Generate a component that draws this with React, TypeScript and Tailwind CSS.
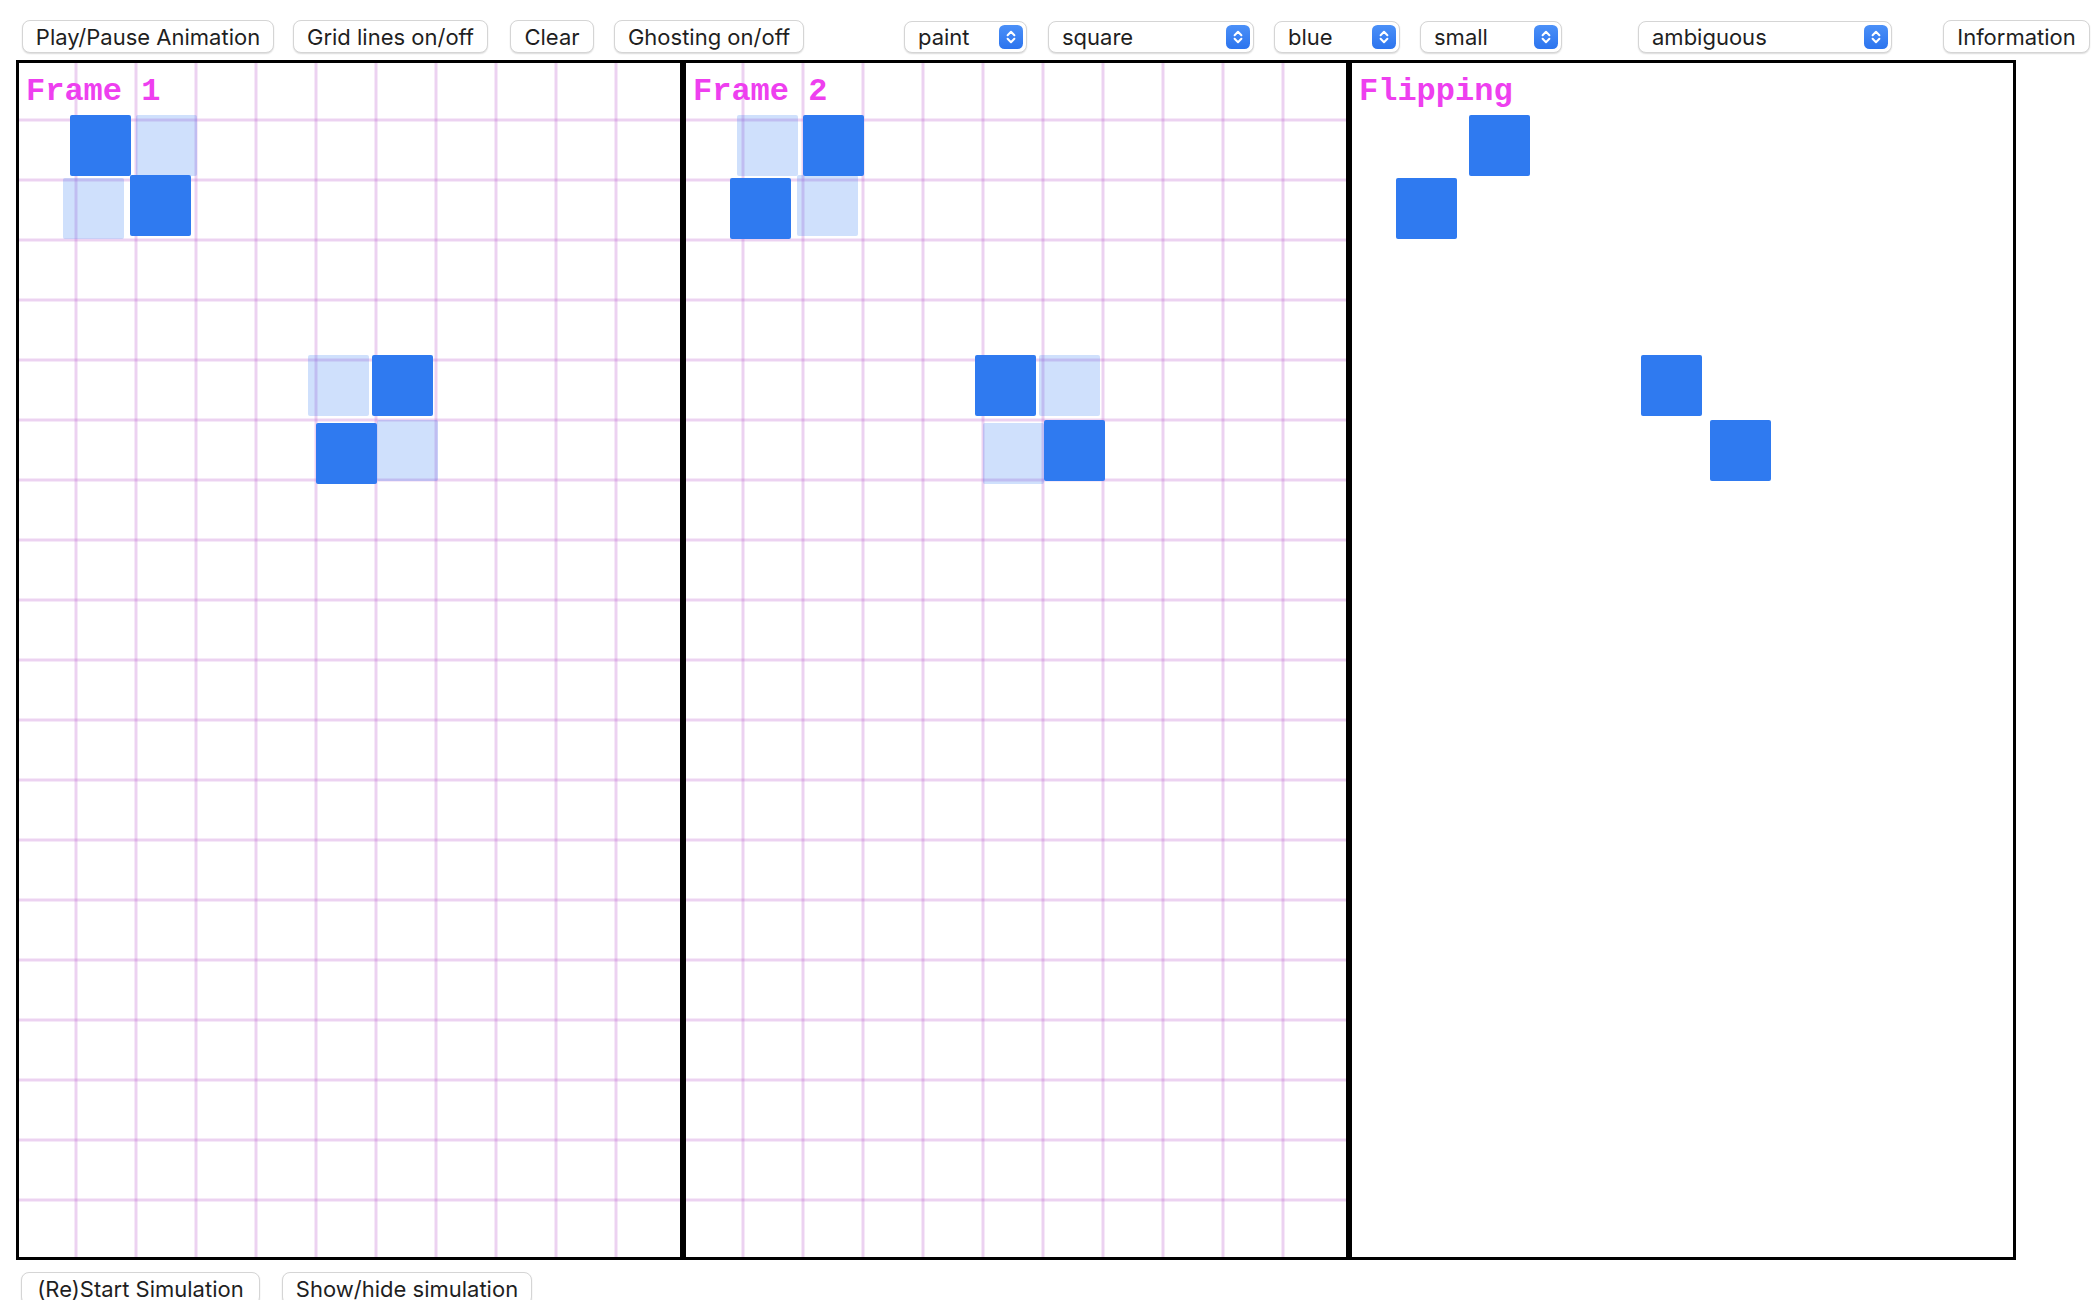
import type { ReactNode } from 'react';

const BLUE = '#2f7af0';
const SIZE = 61;

// frame-relative square positions (x from frame outer left, y from canvas top)
type Sq = [number, number];
const FRAME_A: Sq[] = [
	[54, 55],
	[114, 115],
	[356, 295],
	[300, 363],
];
const FRAME_B: Sq[] = [
	[120, 55],
	[47, 118],
	[292, 295],
	[361, 360],
];

const V_LINES = Array.from({ length: 10 }, (_, i) => (i + 1) * 60);
const H_LINES = Array.from({ length: 19 }, (_, i) => (i + 1) * 60);

function Frame({
	title,
	solid,
	ghost,
	grid,
}: {
	title: string;
	solid: Sq[];
	ghost?: Sq[];
	grid?: boolean;
}) {
	return (
		<div className="relative h-full w-1/3 border-[3px] border-black bg-white">
			<svg className="absolute inset-0 h-full w-full">
				<g transform="translate(-3,-3)">
					{grid && (
						<g stroke="rgba(185,90,205,0.27)" strokeWidth={3}>
							{V_LINES.map((x) => (
								<line key={'v' + x} x1={x} y1={0} x2={x} y2={1200} />
							))}
							{H_LINES.map((y) => (
								<line key={'h' + y} x1={0} y1={y} x2={667} y2={y} />
							))}
						</g>
					)}
					{ghost?.map(([x, y]) => (
						<rect
							key={'g' + x + y}
							x={x}
							y={y}
							width={SIZE}
							height={SIZE}
							rx={2}
							fill={BLUE}
							opacity={0.23}
						/>
					))}
					{solid.map(([x, y]) => (
						<rect
							key={'s' + x + y}
							x={x}
							y={y}
							width={SIZE}
							height={SIZE}
							rx={2}
							fill={BLUE}
						/>
					))}
					<text
						x={10}
						y={40}
						fontFamily="'Liberation Mono', 'Courier New', monospace"
						fontWeight={700}
						fontSize={32}
						fill="#ee3fef"
					>
						{title}
					</text>
				</g>
			</svg>
		</div>
	);
}

function Btn({ children, className }: { children: ReactNode; className: string }) {
	return (
		<button
			className={
				'flex h-[33px] shrink-0 items-center justify-center rounded-[8px] border border-[#d5d5d5] bg-white pt-[1px] text-[22px] text-[#1f1f1f] shadow-[0_1px_1.5px_rgba(0,0,0,0.14)] ' +
				className
			}
		>
			{children}
		</button>
	);
}

function Stepper() {
	return (
		<svg width="24" height="24" viewBox="0 0 24 24" className="shrink-0">
			<defs>
				<linearGradient id="stp" x1="0" y1="0" x2="0" y2="1">
					<stop offset="0" stopColor="#4b90f8" />
					<stop offset="1" stopColor="#2c74ee" />
				</linearGradient>
			</defs>
			<rect x="0" y="0" width="24" height="24" rx="5.5" fill="url(#stp)" />
			<path
				d="M8.6 10.2 L12 6.8 L15.4 10.2 M8.6 13.8 L12 17.2 L15.4 13.8"
				stroke="white"
				strokeWidth="2"
				fill="none"
				strokeLinecap="round"
				strokeLinejoin="round"
			/>
		</svg>
	);
}

function Select({ value, className }: { value: string; className: string }) {
	return (
		<div
			className={
				'flex h-[32px] shrink-0 items-center justify-between rounded-[8px] border border-[#d5d5d5] bg-white pl-[13px] pr-[3px] text-[22px] text-[#1f1f1f] shadow-[0_1px_1.5px_rgba(0,0,0,0.14)] ' +
				className
			}
		>
			<span className="pt-[1px]">{value}</span>
			<Stepper />
		</div>
	);
}

export default function App() {
	return (
		<div className="min-h-screen bg-white font-['Inter',sans-serif]">
			<div className="flex items-center pl-[22px] pt-[20px]">
				<Btn className="w-[252px]">Play/Pause Animation</Btn>
				<Btn className="ml-[19px] w-[195px]">Grid lines on/off</Btn>
				<Btn className="ml-[22px] w-[84px]">Clear</Btn>
				<Btn className="ml-[20px] w-[190px]">Ghosting on/off</Btn>
				<Select value="paint" className="ml-[100px] w-[123px]" />
				<Select value="square" className="ml-[21px] w-[206px]" />
				<Select value="blue" className="ml-[20px] w-[126px]" />
				<Select value="small" className="ml-[20px] w-[142px]" />
				<Select value="ambiguous" className="ml-[76px] w-[254px]" />
				<Btn className="ml-[51px] w-[147px]">Information</Btn>
			</div>

			<div className="mt-[7px] pl-[16px]">
				<div className="flex h-[1200px] w-[2000px]">
					<Frame title="Frame 1" solid={FRAME_A} ghost={FRAME_B} grid />
					<Frame title="Frame 2" solid={FRAME_B} ghost={FRAME_A} grid />
					<Frame title="Flipping" solid={FRAME_B} />
				</div>
			</div>

			<div className="mt-[12px] flex items-center pl-[21px]">
				<Btn className="w-[239px]">(Re)Start Simulation</Btn>
				<Btn className="ml-[22px] w-[250px]">Show/hide simulation</Btn>
			</div>
		</div>
	);
}
